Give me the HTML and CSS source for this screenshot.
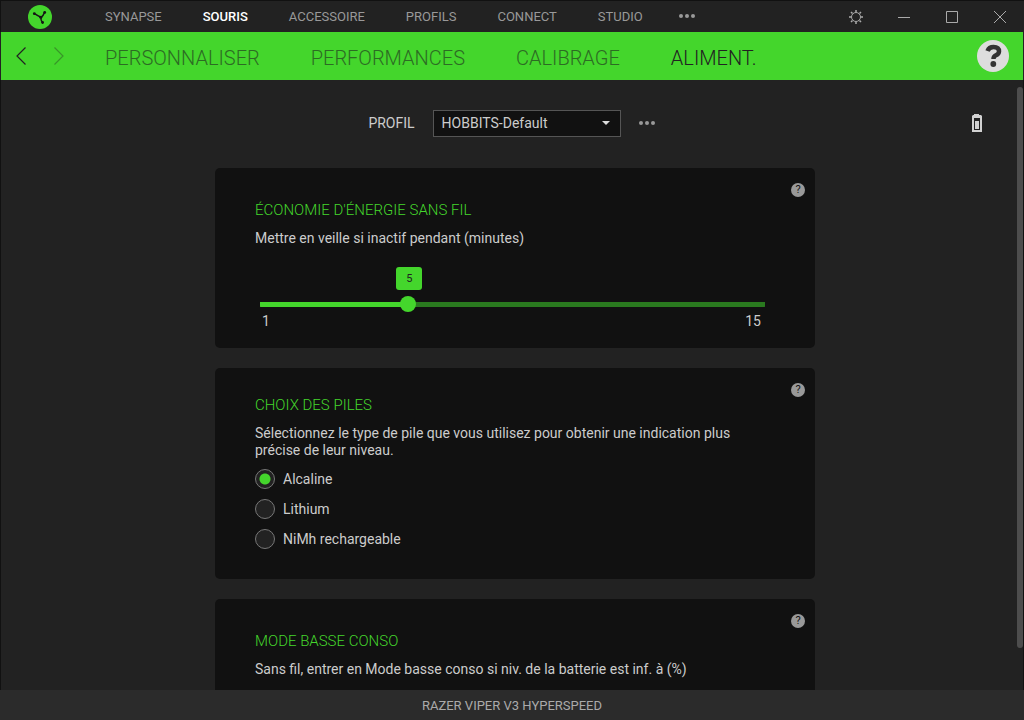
FILE: index.html
```html
<!DOCTYPE html>
<html lang="fr">
<head>
<meta charset="utf-8">
<title>Razer Synapse</title>
<link rel="stylesheet" href="styles.css">
</head>
<body>
<div class="app">
  <header class="titlebar">
    <svg class="logo" viewBox="0 0 24 24" aria-hidden="true"><circle cx="12" cy="12" r="12" fill="#44d62c"/><g stroke="#151515" stroke-width="1.500" fill="none" stroke-linecap="round"><path d="M13 12.300Q10 11 6.500 8.700M13 12.300Q15.500 10.500 16.500 7.500M13 12.300Q12.500 15.500 14.500 17.500"/></g><g fill="#151515"><circle cx="6.300" cy="8.700" r="1.400"/><circle cx="16.700" cy="7.500" r="1.400"/><circle cx="14.600" cy="17.500" r="1.400"/><circle cx="12.800" cy="12.300" r="1.500"/></g></svg>
    <nav class="menu">
      <a href="#">SYNAPSE</a>
      <a href="#" class="active">SOURIS</a>
      <a href="#">ACCESSOIRE</a>
      <a href="#">PROFILS</a>
      <a href="#">CONNECT</a>
      <a href="#">STUDIO</a>
    </nav>
    <button class="dots" aria-label="Plus"><svg width="18" height="6" viewBox="0 0 18 6"><circle cx="3" cy="2" r="2"/><circle cx="9" cy="2" r="2"/><circle cx="15" cy="2" r="2"/></svg></button>
    <div class="window-controls">
      <button aria-label="Paramètres"><svg viewBox="0 0 16 16"><circle cx="8" cy="8" r="4.500"/><path d="M8 1v2M8 13v2M1 8h2M13 8h2M3 3l1.500 1.500M11.500 11.500L13 13M13 3l-1.500 1.500M4.500 11.500L3 13" stroke-width="1.500"/></svg></button>
      <button aria-label="Réduire"><svg viewBox="0 0 16 16"><path d="M2 8.500h12"/></svg></button>
      <button aria-label="Agrandir"><svg viewBox="0 0 16 16"><path d="M2.500 2.500h11v11h-11z"/></svg></button>
      <button aria-label="Fermer"><svg viewBox="0 0 16 16"><path d="M2 2l12 12M14 2L2 14"/></svg></button>
    </div>
  </header>
  <div class="tabbar">
    <div class="history">
      <button aria-label="Précédent"><svg width="12" height="20" viewBox="0 0 12 20"><path d="M10.500 1.500L2 10l8.500 8.500"/></svg></button>
      <button aria-label="Suivant" disabled><svg width="12" height="20" viewBox="0 0 12 20"><path d="M1.500 1.500L10 10l-8.500 8.500"/></svg></button>
    </div>
    <nav class="tabs">
      <a href="#">PERSONNALISER</a>
      <a href="#">PERFORMANCES</a>
      <a href="#">CALIBRAGE</a>
      <a href="#" class="active">ALIMENT.</a>
    </nav>
    <button class="help-main" aria-label="Aide"><svg viewBox="0 0 32 32"><circle cx="16" cy="16" r="16" fill="#ddd"/><path d="M10.500 11Q12 7 16.500 7Q22 7 22 11.500Q22 14 18.500 15.500Q16.500 16.500 16.500 19" fill="none" stroke="#333" stroke-width="4.500"/><circle cx="16.300" cy="24" r="2.900" fill="#333"/></svg></button>
  </div>
  <main class="content">
    <div class="profile">
      <label for="profil">PROFIL</label>
      <div class="select">
        <select id="profil"><option>HOBBITS-Default</option></select>
        <svg class="caret" width="8" height="4" viewBox="0 0 8 4"><path d="M0 0h8L4 4z" fill="#ddd"/></svg>
      </div>
      <button class="dots dots-muted" aria-label="Options du profil"><svg width="18" height="6" viewBox="0 0 18 6"><circle cx="3" cy="2" r="2"/><circle cx="9" cy="2" r="2"/><circle cx="15" cy="2" r="2"/></svg></button>
      <svg class="battery" width="12" height="20" viewBox="0 0 12 20" aria-label="Batterie"><path d="M3 1h5v1h2l1 1v16H1V3l1-1h1z" fill="#d2d2d2"/><path d="M3 5h6v12H3z" fill="#222"/><path d="M4 8h4v8H4z" fill="#d2d2d2"/></svg>
    </div>
    <div class="cards">
      <section class="card">
        <button class="help" aria-label="Aide">?</button>
        <h2>ÉCONOMIE D'ÉNERGIE SANS FIL</h2>
        <label class="text" for="veille">Mettre en veille si inactif pendant (minutes)</label>
        <div class="slider">
          <output class="bubble" for="veille">5</output>
          <input id="veille" type="range" min="1" max="15" value="5">
          <div class="limits"><span>1</span><span>15</span></div>
        </div>
      </section>
      <section class="card card-compact">
        <button class="help" aria-label="Aide">?</button>
        <h2>CHOIX DES PILES</h2>
        <p class="text">Sélectionnez le type de pile que vous utilisez pour obtenir une indication plus précise de leur niveau.</p>
        <div class="choices">
          <label><input type="radio" name="pile" checked>Alcaline</label>
          <label><input type="radio" name="pile">Lithium</label>
          <label><input type="radio" name="pile">NiMh rechargeable</label>
        </div>
      </section>
      <section class="card">
        <button class="help" aria-label="Aide">?</button>
        <h2>MODE BASSE CONSO</h2>
        <p class="text">Sans fil, entrer en Mode basse conso si niv. de la batterie est inf. à (%)</p>
      </section>
    </div>
    <div class="scrollbar"></div>
  </main>
  <footer class="device">RAZER VIPER V3 HYPERSPEED</footer>
</div>
</body>
</html>
```

FILE: styles.css
```css
* { box-sizing: border-box; }
body { margin: 0; background: #222; color: #ccc; font: 14px/17px Roboto, sans-serif; }
button { border: 0; padding: 0; background: none; color: inherit; font: inherit; display: flex; align-items: center; justify-content: center; }
a { color: inherit; text-decoration: none; }
h2, p { margin: 0; }
.app { height: 100vh; display: flex; flex-direction: column; }
.titlebar { height: 32px; flex: none; display: flex; align-items: center; border: 1px solid #111; border-width: 1px 0 0 1px; padding-left: 27px; }
.logo { width: 24px; height: 24px; flex: none; }
.menu { display: flex; gap: 41px; margin-left: 53px; font-size: 13px; color: #999; }
.menu .active { color: #fff; font-weight: 500; }
.dots { margin-left: 35px; fill: #999; }
.window-controls { display: flex; margin-left: auto; }
.window-controls button { width: 48px; height: 31px; }
.window-controls svg { width: 16px; height: 16px; fill: none; stroke: #aaa; stroke-width: 1; }
.tabbar { height: 48px; flex: none; display: flex; align-items: center; margin: 0 1px; padding: 0 14px; background: #44d62c; }
.history { display: flex; gap: 26px; }
.history svg { fill: none; stroke: #222; stroke-width: 1.2; }
.history button:disabled { opacity: .35; }
.tabs { display: flex; gap: 51px; margin-left: 40px; padding-top: 3px; font-size: 20px; line-height: 26px; font-weight: 300; color: #2d6b24; }
.tabs .active { color: #222; }
.help-main { margin-left: auto; }
.help-main svg { width: 32px; height: 32px; }
.content { flex: 1; min-height: 0; overflow: hidden; position: relative; border: 0 solid #111; border-width: 0 1px; padding: 30px 0 0 6px; }
.profile { display: flex; align-items: center; justify-content: center; height: 27px; margin-right: 6px; position: relative; }
.select { position: relative; width: 188px; height: 27px; margin-left: 18px; }
.select select { appearance: none; width: 100%; height: 100%; padding: 0 8px; border: 1px solid #555; border-radius: 0; background: #111; color: #ccc; font: inherit; }
.caret { position: absolute; right: 11px; top: 11px; pointer-events: none; }
.dots-muted { margin-left: 17px; }
.battery { position: absolute; right: 34px; top: 3px; }
.cards { width: 600px; margin: 31px auto 0; display: flex; flex-direction: column; gap: 20px; }
.card { position: relative; background: #111; border-radius: 5px; padding: 32px 40px 18px; }
.card-compact { padding-top: 27px; padding-bottom: 30px; }
.card h2 { color: #44d62c; font-size: 15px; line-height: 20px; font-weight: 300; margin-bottom: 10px; }
.text { display: block; }
.help { position: absolute; right: 10px; top: 15px; width: 14px; height: 14px; border-radius: 50%; background: #999; color: #111; font-size: 11px; line-height: 14px; }
.slider { position: relative; margin: 49px 10px 0 5px; }
.slider input { appearance: none; display: block; width: 100%; height: 16px; margin: 0 0 1px; border-radius: 6px; background: linear-gradient(to right, #44d62c 29%, #2a7a1f 29%) center / 100% 5px no-repeat; }
.slider input::-webkit-slider-thumb { appearance: none; width: 16px; height: 16px; border-radius: 50%; background: #44d62c; }
.bubble { position: absolute; left: 27%; bottom: 40px; width: 26px; height: 23px; border-radius: 3px; background: #44d62c; color: #222; font-size: 11px; line-height: 24px; text-align: center; }
.limits { display: flex; justify-content: space-between; padding: 0 4px 0 2px; }
.choices { display: flex; flex-direction: column; gap: 10px; margin-top: 10px; }
.choices label { display: flex; align-items: center; gap: 8px; height: 20px; }
.choices input { appearance: none; width: 20px; height: 20px; margin: 0; border: 1px solid #777; border-radius: 50%; background: #222; }
.choices input:checked { background: radial-gradient(circle, #44d62c 5px, #222 6px); }
.scrollbar { position: absolute; right: 0; top: 7px; width: 6px; height: 92%; border-radius: 4px; background: #4d4d4d; }
.device { height: 30px; flex: none; background: #2b2b2b; color: #aaa; text-align: center; font-size: 13px; line-height: 31px; }
```
